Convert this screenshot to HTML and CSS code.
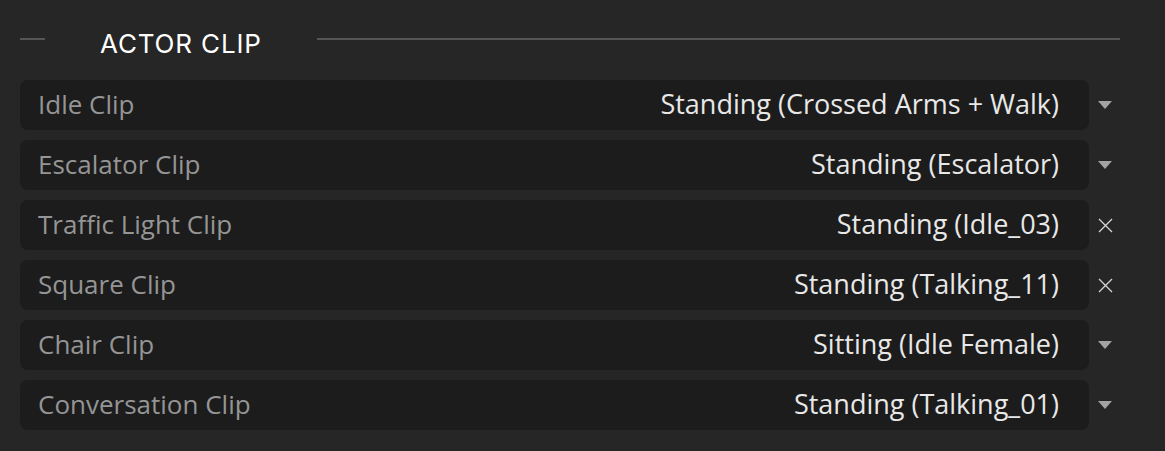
FILE: index.html
```html
<!DOCTYPE html>
<html lang="en">

<head>
  <meta charset="UTF-8">
  <title>Actor Clip</title>
  <link rel="stylesheet" href="styles.css">
</head>

<body>
  <div class="panel">
    <div class="section-head">
      <span class="dash"></span>
      <span class="title">ACTOR CLIP</span>
      <span class="rule"></span>
    </div>

    <div class="field">
      <div class="box"><span class="label">Idle Clip</span><span class="value">Standing (Crossed Arms + Walk)</span></div>
      <span class="icon"><svg width="14" height="8" viewBox="0 0 14 8"><path d="M0 0H14L7 8Z" fill="#a3a3a3"/></svg></span>
    </div>
    <div class="field">
      <div class="box"><span class="label">Escalator Clip</span><span class="value">Standing (Escalator)</span></div>
      <span class="icon"><svg width="14" height="8" viewBox="0 0 14 8"><path d="M0 0H14L7 8Z" fill="#a3a3a3"/></svg></span>
    </div>
    <div class="field">
      <div class="box"><span class="label">Traffic Light Clip</span><span class="value">Standing (Idle_03)</span></div>
      <span class="icon"><svg width="15" height="15" viewBox="0 0 15 15"><path d="M1 1L14 14M14 1L1 14" stroke="#d6d6d6" stroke-width="1.3"/></svg></span>
    </div>
    <div class="field">
      <div class="box"><span class="label">Square Clip</span><span class="value">Standing (Talking_11)</span></div>
      <span class="icon"><svg width="15" height="15" viewBox="0 0 15 15"><path d="M1 1L14 14M14 1L1 14" stroke="#d6d6d6" stroke-width="1.3"/></svg></span>
    </div>
    <div class="field">
      <div class="box"><span class="label">Chair Clip</span><span class="value">Sitting (Idle Female)</span></div>
      <span class="icon"><svg width="14" height="8" viewBox="0 0 14 8"><path d="M0 0H14L7 8Z" fill="#a3a3a3"/></svg></span>
    </div>
    <div class="field">
      <div class="box"><span class="label">Conversation Clip</span><span class="value">Standing (Talking_01)</span></div>
      <span class="icon"><svg width="14" height="8" viewBox="0 0 14 8"><path d="M0 0H14L7 8Z" fill="#a3a3a3"/></svg></span>
    </div>
  </div>
</body>

</html>
```

FILE: styles.css
```css
* {
  padding: 0;
  margin: 0;
  box-sizing: border-box;
}

body {
  background: #262626;
  font-family: "Open Sans", "Noto Sans", sans-serif;
}

.panel {
  padding: 18px 45px 0 20px;
  display: flex;
  flex-direction: column;
  gap: 10px;
}

.section-head {
  display: flex;
  align-items: center;
  height: 42px;
  margin-bottom: 10px;
}

.section-head .dash {
  width: 25px;
  height: 2px;
  background: #555;
}

.section-head .title {
  margin-left: 55px;
  padding-top: 8px;
  font-family: "Inter", "Roboto", sans-serif;
  font-size: 26px;
  color: #fff;
  letter-spacing: 0.85px;
}

.section-head .rule {
  flex: 1;
  height: 2px;
  background: #555;
  margin-left: 55px;
}

.field {
  display: flex;
  align-items: center;
}

.box {
  flex: 1;
  height: 50px;
  background: #1c1c1c;
  border-radius: 8px;
  display: flex;
  align-items: center;
  justify-content: space-between;
  padding: 0 30px 3px 18px;
  font-size: 27px;
}

.label {
  font-size: 26px;
  color: #959595;
}

.value {
  color: #e8e8e8;
}

.icon {
  width: 30px;
  display: flex;
  justify-content: center;
  margin-left: 1px;
}
```
